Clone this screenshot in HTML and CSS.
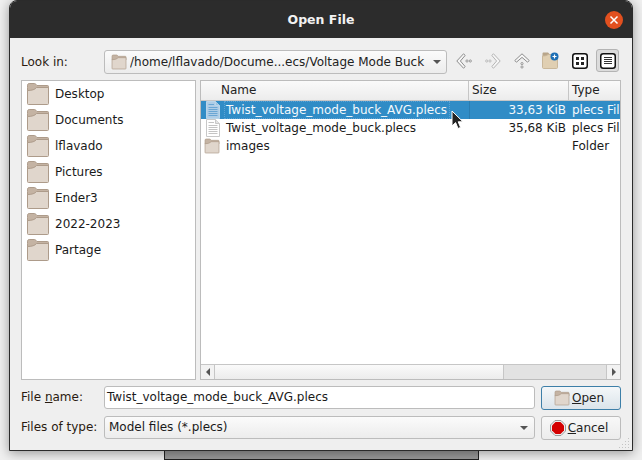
FILE: index.html
```html
<!DOCTYPE html>
<html lang="en">
<head>
<meta charset="utf-8">
<title>Open File</title>
<link rel="stylesheet" href="styles.css">
</head>
<body>
<svg class="defs" width="0" height="0" aria-hidden="true">
  <symbol id="folder" viewBox="0 0 24 24">
    <path d="M1.5 5.5V3.2C1.5 2.2 2.2 1.5 3.2 1.5H8.5C9.6 1.5 10 2.6 11 3.5H21.5C22.2 3.5 22.5 3.9 22.5 4.5V9H1.5Z" fill="#c4b3a3" stroke="#ad9b8a"/>
    <path d="M1.5 8.5C6 8.5 9 7.5 10.5 5.5H22.5V21.5C22.5 22.2 22.2 22.5 21.5 22.5H2.5C1.8 22.5 1.5 22.2 1.5 21.5Z" fill="#e0d6cc" stroke="#ad9b8a"/>
  </symbol>
  <symbol id="doc" viewBox="0 0 16 18">
    <path d="M1.5 .5H10.5L14.5 4.5V17.5H1.5Z" fill="#fff" stroke="#c8c8c8"/>
    <path d="M10.5 .5V4.5H14.5" fill="#e4e4e4" stroke="#c8c8c8"/>
    <path d="M3.5 3.5H9M3.5 6.5H12.5M3.5 8.5H12.5M3.5 10.5H12.5M3.5 12.5H12.5M3.5 14.5H12.5" stroke="#c4c4c4" fill="none"/>
  </symbol>
  <symbol id="docsel" viewBox="0 0 16 18">
    <path d="M1.5 .5H10.5L14.5 4.5V17.5H1.5Z" fill="#aecde6" stroke="#b9d5ea"/>
    <path d="M10.5 .5V4.5H14.5" fill="#9cc3e0" stroke="#b9d5ea"/>
    <path d="M3.5 3.5H9M3.5 6.5H12.5M3.5 8.5H12.5M3.5 10.5H12.5M3.5 12.5H12.5M3.5 14.5H12.5" stroke="#6aa6d4" fill="none"/>
  </symbol>
</svg>

<div class="backdrop-window"></div>

<main class="dialog">
  <header class="titlebar">
    <h1 class="title">Open File</h1>
    <span class="close">
      <svg width="18" height="18" viewBox="0 0 18 18"><circle cx="9" cy="9" r="9" fill="#e2501f"/><path d="M5.5 5.5L12.5 12.5M12.5 5.5L5.5 12.5" stroke="#fff" stroke-width="1.5"/></svg>
    </span>
  </header>

  <div class="content">
    <div class="lookin">
      <label class="lbl">Look in:</label>
      <div class="combo path">
        <svg class="ic16" width="16" height="16"><use href="#folder"/></svg>
        <span class="path-text">/home/lflavado/Docume...ecs/Voltage Mode Buck</span>
        <span class="caret"></span>
      </div>
      <div class="tools">
        <span class="tool">
          <svg width="16" height="16" viewBox="0 0 16 16" fill="none"><path d="M7.5 .8L.8 8L7.5 15.2L9.2 13.6L4.4 8L9.2 2.4Z" stroke="#8c8c8c" fill="#f6f6f6"/><circle cx="11" cy="8" r="1.1" stroke="#989898"/><circle cx="14.3" cy="8" r="1.1" stroke="#989898"/></svg>
        </span>
        <span class="tool">
          <svg width="16" height="16" viewBox="0 0 16 16" fill="none"><path d="M8.5 .8L15.2 8L8.5 15.2L6.8 13.6L11.6 8L6.8 2.4Z" stroke="#b4b4b4" fill="#f6f6f6"/><circle cx="5" cy="8" r="1.1" stroke="#bcbcbc"/><circle cx="1.7" cy="8" r="1.1" stroke="#bcbcbc"/></svg>
        </span>
        <span class="tool">
          <svg width="16" height="16" viewBox="0 0 16 16" fill="none"><path d="M.8 7.5L8 .8L15.2 7.5L13.6 9.2L8 4.4L2.4 9.2Z" stroke="#8c8c8c" fill="#f6f6f6"/><circle cx="8" cy="10.6" r="1.1" stroke="#989898"/><circle cx="8" cy="14" r="1.1" stroke="#989898"/></svg>
        </span>
        <span class="tool">
          <svg width="17" height="17" viewBox="0 0 17 17"><path d="M.5 3V1.5C.5 1 1 .5 1.5 .5H6L7.5 2H13V5H.5Z" fill="#b8a58a"/><path d="M.5 4C3 4 5 3.5 6 2.5H15.5V15.5C15.5 16 15.2 16.5 14.5 16.5H1.5C1 16.5 .5 16 .5 15.5Z" fill="#e0cfb2" stroke="#c9b79a"/><circle cx="12.5" cy="4.5" r="4" fill="#1d6fb5"/><path d="M10.5 4.5H14.5M12.5 2.5V6.5" stroke="#fff" stroke-width="1.2"/></svg>
        </span>
        <span class="tool">
          <svg width="16" height="16" viewBox="0 0 16 16"><rect x=".75" y=".75" width="14.5" height="14.5" rx="2.5" fill="#fff" stroke="#111" stroke-width="1.5"/><path d="M4 4h3v3H4zM9 4h3v3H9zM4 9h3v3H4zM9 9h3v3H9z" fill="#222"/></svg>
        </span>
        <span class="tool on">
          <svg width="16" height="16" viewBox="0 0 16 16"><rect x=".75" y=".75" width="14.5" height="14.5" rx="2.5" fill="#fff" stroke="#111" stroke-width="1.5"/><path d="M4 4.5H12M4 6.5H12M4 8.5H12M4 10.5H12" stroke="#333"/></svg>
        </span>
      </div>
    </div>

    <div class="panes">
      <ul class="sidebar">
        <li class="place"><svg width="24" height="24"><use href="#folder"/></svg>Desktop</li>
        <li class="place"><svg width="24" height="24"><use href="#folder"/></svg>Documents</li>
        <li class="place"><svg width="24" height="24"><use href="#folder"/></svg>lflavado</li>
        <li class="place"><svg width="24" height="24"><use href="#folder"/></svg>Pictures</li>
        <li class="place"><svg width="24" height="24"><use href="#folder"/></svg>Ender3</li>
        <li class="place"><svg width="24" height="24"><use href="#folder"/></svg>2022-2023</li>
        <li class="place"><svg width="24" height="24"><use href="#folder"/></svg>Partage</li>
      </ul>
      <div class="splitter"></div>
      <section class="files">
        <div class="cols head">
          <span class="hcell name">Name</span>
          <span class="hcell">Size</span>
          <span class="hcell last">Type</span>
        </div>
        <div class="rows">
          <div class="cols row sel">
            <span class="cell name"><svg class="ic-doc" width="16" height="18"><use href="#docsel"/></svg><span class="focus">Twist_voltage_mode_buck_AVG.plecs</span></span>
            <span class="cell size">33,63 KiB</span>
            <span class="cell type-col">plecs File</span>
          </div>
          <div class="cols row">
            <span class="cell name"><svg class="ic-doc" width="16" height="18"><use href="#doc"/></svg><span class="plain">Twist_voltage_mode_buck.plecs</span></span>
            <span class="cell size">35,68 KiB</span>
            <span class="cell type-col">plecs File</span>
          </div>
          <div class="cols row">
            <span class="cell name"><svg class="ic-folder" width="16" height="16"><use href="#folder"/></svg><span class="plain">images</span></span>
            <span class="cell size"></span>
            <span class="cell type-col">Folder</span>
          </div>
        </div>
        <div class="hscroll">
          <span class="arrow"><span class="tri left"></span></span>
          <span class="handle"></span>
          <span class="trough"></span>
          <span class="arrow end"><span class="tri right"></span></span>
        </div>
      </section>
    </div>

    <div class="form">
      <label class="lbl">File <u>n</u>ame:</label>
      <div class="input">Twist_voltage_mode_buck_AVG.plecs</div>
      <button class="btn primary"><svg width="16" height="16"><use href="#folder"/></svg><span><u>O</u>pen</span></button>
      <label class="lbl">Files of type:</label>
      <div class="combo type"><span class="type-text">Model files (*.plecs)</span><span class="caret"></span></div>
      <button class="btn"><svg width="16" height="16" viewBox="0 0 16 16"><path d="M5 .5H11L15.5 5V11L11 15.5H5L.5 11V5Z" fill="#eee" stroke="#9a9a9a"/><path d="M5.5 2H10.5L14 5.5V10.5L10.5 14H5.5L2 10.5V5.5Z" fill="#d40000"/></svg><span><u>C</u>ancel</span></button>
    </div>
  </div>

  <svg class="grip" width="12" height="12" viewBox="0 0 12 12" fill="#c4c4c4"><rect x="9" y="1" width="1" height="1"/><rect x="6" y="4" width="1" height="1"/><rect x="9" y="4" width="1" height="1"/><rect x="3" y="7" width="1" height="1"/><rect x="6" y="7" width="1" height="1"/><rect x="9" y="7" width="1" height="1"/><rect x="0" y="10" width="1" height="1"/><rect x="3" y="10" width="1" height="1"/><rect x="6" y="10" width="1" height="1"/><rect x="9" y="10" width="1" height="1"/></svg>
</main>

<svg class="pointer" width="14" height="20" viewBox="0 0 14 20"><path d="M1 1V16L4.6 12.6L7 18.5L9.6 17.4L7.2 11.8H12Z" fill="#222" stroke="#fff" stroke-width="1"/></svg>
</body>
</html>
```
FILE: styles.css
```css
* { box-sizing: border-box; }
html, body { margin: 0; height: 100%; }
body {
  position: relative;
  width: 642px;
  height: 460px;
  overflow: hidden;
  background: #f0f0f0;
  font-family: "DejaVu Sans", sans-serif;
  font-size: 12px;
  color: #1a1a1a;
}
.defs { position: absolute; }
.backdrop-window {
  position: absolute;
  left: 164px;
  top: 0;
  width: 315px;
  height: 460px;
  background: #9a9a9a;
  border: 1px solid #222;
}
.dialog {
  position: absolute;
  left: 9px;
  top: 0;
  width: 624px;
  height: 451px;
  display: flex;
  flex-direction: column;
  background: #efefef;
  border: 1px solid #2b2b2b;
  border-radius: 8px 8px 0 0;
  box-shadow: 0 2px 12px rgba(0,0,0,.38);
}
.titlebar {
  height: 37px;
  flex: none;
  display: flex;
  align-items: center;
  justify-content: center;
  position: relative;
  background: #2c2c2c;
  border-radius: 7px 7px 0 0;
}
.title { margin: 0; font-size: 12.5px; font-weight: 700; color: #f2f2f2; }
.close { position: absolute; right: 9px; top: 10px; height: 18px; }
.content { flex: 1; display: flex; flex-direction: column; padding: 11px 11px 0; }
.lbl { white-space: nowrap; color: #2a1a10; position: relative; top: -1px; }
.lookin { display: flex; align-items: center; height: 25px; }
.lookin .lbl { width: 83px; flex: none; top: 0; }
.combo {
  display: flex;
  align-items: center;
  height: 24px;
  border: 1px solid #bcbcbc;
  border-radius: 3px;
  background: linear-gradient(#fbfbfb, #ececec);
}
.path { width: 343px; flex: none; padding: 0 5px 0 6px; gap: 3px; }
.path-text { flex: 1; white-space: nowrap; overflow: hidden; color: #222; }
.type-text { flex: 1; padding: 0 0 2px 4px; }
.caret {
  width: 0; height: 0; flex: none;
  border-left: 4px solid transparent;
  border-right: 4px solid transparent;
  border-top: 4px solid #555;
}
.form .type { padding-right: 6px; height: 23px; width: 431px; align-self: start; }
.tools { display: flex; margin: -2px 0 0 2px; }
.tool { width: 29px; height: 23px; display: flex; align-items: center; justify-content: center; }
.tool.on { width: 23px; margin-left: 2px; background: #dcdcdc; border: 1px solid #b4b4b4; border-radius: 3px; }
.panes { display: flex; height: 300px; margin-top: 6px; }
.sidebar {
  list-style: none;
  margin: 0;
  padding: 0 0 0 4px;
  width: 175px;
  flex: none;
  background: #fff;
  border: 1px solid #bcbcbc;
}
.place { display: flex; align-items: center; height: 26px; gap: 5px; }
.place svg { flex: none; }
.splitter { width: 4px; flex: none; }
.files { flex: 1; min-width: 0; display: flex; flex-direction: column; overflow: hidden; background: #fff; border: 1px solid #bcbcbc; }
.cols { display: grid; grid-template-columns: 268px 100px 1fr; }
.head { height: 20px; background: linear-gradient(#fafafa, #ececec); border-bottom: 1px solid #c6c6c6; }
.hcell { padding-left: 3px; line-height: 18px; border-right: 1px solid #c6c6c6; color: #222; }
.hcell.name { padding-left: 20px; }
.hcell.last { border-right: 0; }
.rows { flex: 1; }
.row { height: 18px; line-height: 18px; }
.cell { white-space: nowrap; overflow: hidden; color: #1a1a1a; padding-left: 3px; }
.cell.name { display: flex; align-items: center; padding-left: 4px; }
.cell.size { text-align: right; padding-right: 3px; }
.cell.type-col { overflow: visible; }
.ic-doc { flex: none; }
.ic-folder { flex: none; margin-left: -1px; margin-right: 1px; }
.focus, .plain { margin-left: 3px; padding: 0 3px 0 2px; }
.focus { outline: 1px dotted #5ba3d6; outline-offset: -1px; }
.sel { background: #308cc6; }
.sel .cell { color: #f4f9fc; }
.sel .cell.size { border-left: 1px solid #2a7cb0; }
.hscroll { height: 15px; display: flex; border-top: 1px solid #c6c6c6; background: #e2e2e2; }
.arrow { width: 14px; flex: none; display: flex; align-items: center; justify-content: center; background: #f2f2f2; border-right: 1px solid #c6c6c6; }
.arrow.end { border-right: 0; border-left: 1px solid #c6c6c6; }
.handle { width: 289px; flex: none; background: linear-gradient(#fafafa, #ececec); border-right: 1px solid #c6c6c6; }
.trough { flex: 1; }
.tri { width: 0; height: 0; border-top: 4px solid transparent; border-bottom: 4px solid transparent; }
.tri.left { border-right: 4px solid #555; }
.tri.right { border-left: 4px solid #555; }
.form {
  display: grid;
  grid-template-columns: 83px 431px 80px;
  grid-template-rows: 24px 24px;
  row-gap: 6px;
  margin-top: 6px;
  align-items: center;
}
.input {
  height: 23px;
  line-height: 21px;
  padding-left: 2px;
  background: #fff;
  border: 1px solid #bcbcbc;
  border-radius: 3px;
  white-space: nowrap;
  align-self: start;
}
.btn {
  grid-column: 3;
  width: 80px;
  height: 24px;
  margin-left: 6px;
  margin-right: -6px;
  display: flex;
  align-items: center;
  justify-content: center;
  gap: 2px;
  padding: 0 4px 0 0;
  font: inherit;
  color: #222;
  border: 1px solid #bcbcbc;
  border-radius: 3px;
  background: linear-gradient(#f8f8f8, #ececec);
}
.btn.primary { border-color: #3d7fa8; background: linear-gradient(#f4f7f9, #dbe4ea); }
.grip { position: absolute; right: 1px; bottom: 1px; }
.pointer { position: absolute; left: 451px; top: 110px; }
```
